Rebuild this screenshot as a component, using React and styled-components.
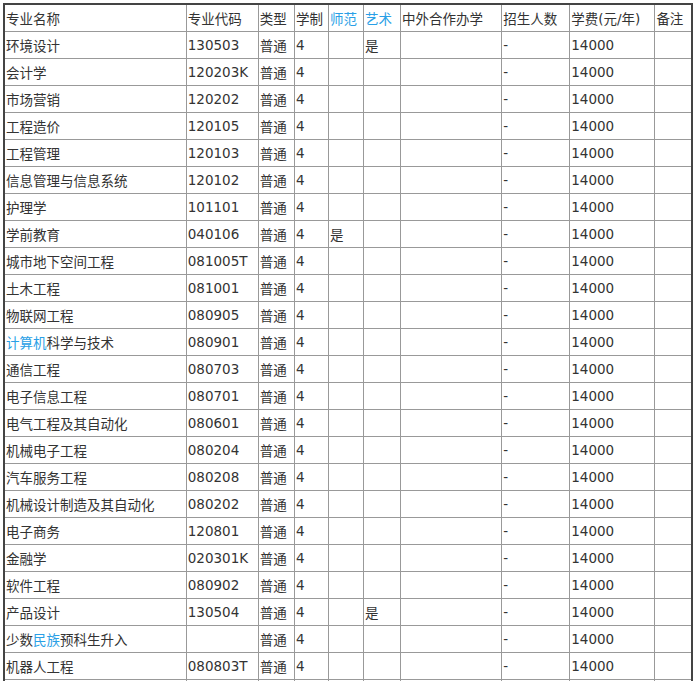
import React from "react";
import styled, { createGlobalStyle } from "styled-components";

const G = createGlobalStyle`body{margin:0;background:#fff;}`;
const Wrap = styled.div`padding:3px 0 0 3px;`;
const Table = styled.table`
  border-collapse:collapse;border:2px solid #444;
  font-family:"DejaVu Sans","Noto Sans CJK SC",sans-serif;font-size:13.5px;color:#333;
  table-layout:fixed;width:690px;
`;
const Td = styled.td`
  border:1px solid #999;height:26px;padding:0 0 0 1px;white-space:nowrap;overflow:hidden;
  vertical-align:middle;text-align:left;font-weight:normal;
`;
const Link = styled.span`color:#2a9fe6;`;
const widths=[182,72,36,34,35,37,101,68,85,37];
const rows=[
["环境设计","130503","","是"],["会计学","120203K"],["市场营销","120202"],["工程造价","120105"],
["工程管理","120103"],["信息管理与信息系统","120102"],["护理学","101101"],["学前教育","040106","是"],
["城市地下空间工程","081005T"],["土木工程","081001"],["物联网工程","080905"],["计算机科学与技术","080901"],
["通信工程","080703"],["电子信息工程","080701"],["电气工程及其自动化","080601"],["机械电子工程","080204"],
["汽车服务工程","080208"],["机械设计制造及其自动化","080202"],["电子商务","120801"],["金融学","020301K"],
["软件工程","080902"],["产品设计","130504","","是"],["少数民族预科生升入",""],["机器人工程","080803T"],
];
const name=n=>n==="计算机科学与技术"?<><Link>计算机</Link>科学与技术</>:n==="少数民族预科生升入"?<>少数<Link>民族</Link>预科生升入</>:n;
export default function App(){return(<><G/><Wrap><Table><colgroup>{widths.map((w,i)=><col key={i} style={{width:w}}/>)}</colgroup><tbody>
<tr><Td>专业名称</Td><Td>专业代码</Td><Td>类型</Td><Td>学制</Td><Td><Link>师范</Link></Td><Td><Link>艺术</Link></Td><Td>中外合作办学</Td><Td>招生人数</Td><Td>学费(元/年)</Td><Td>备注</Td></tr>
{rows.map((r,i)=><tr key={i}><Td>{name(r[0])}</Td><Td>{r[1]}</Td><Td>普通</Td><Td>4</Td><Td>{r[2]||""}</Td><Td>{r[3]||""}</Td><Td></Td><Td>-</Td><Td>14000</Td><Td></Td></tr>)}
<tr><Td/><Td/><Td/><Td/><Td/><Td/><Td/><Td/><Td/><Td/></tr>
</tbody></Table></Wrap></>);}
